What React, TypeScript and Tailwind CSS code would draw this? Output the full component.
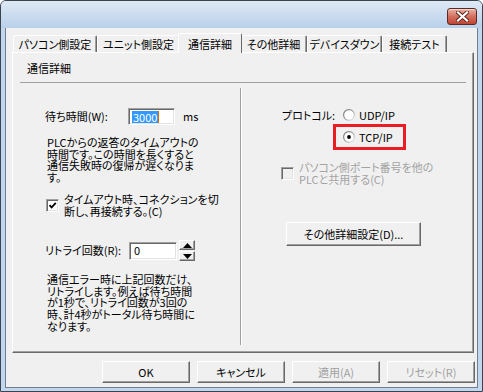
import type { ReactNode } from 'react'

const raised =
  'border border-t-white border-l-white border-r-[#696969] border-b-[#696969] shadow-[inset_-1px_-1px_0_#a0a0a0]'
const sunken =
  'border border-t-[#a0a0a0] border-l-[#a0a0a0] border-r-white border-b-white shadow-[inset_1px_1px_0_#696969,inset_-1px_-1px_0_#e3e3e3]'

const Check = ({ checked, disabled }: { checked?: boolean; disabled?: boolean }) => (
  <div className={`flex h-[13px] w-[13px] shrink-0 items-center justify-center ${sunken} ${disabled ? 'bg-[#f0f0f0]' : 'bg-white'}`}>
    {checked && (
      <svg width="9" height="9" viewBox="0 0 9 9">
        <path d="M1.5 4.2 L3.6 6.4 L7.8 1.8" fill="none" stroke="#000" strokeWidth="1.8" />
      </svg>
    )}
  </div>
)

const Radio = ({ checked, id }: { checked?: boolean; id: string }) => (
  <svg width="12" height="12" viewBox="0 0 12 12" className="shrink-0">
    <defs>
      <linearGradient id={id} x1="0" y1="0" x2="1" y2="1">
        <stop offset="0" stopColor="#6a6a6a" />
        <stop offset="0.55" stopColor="#a8a8a8" />
        <stop offset="1" stopColor="#f4f4f4" />
      </linearGradient>
    </defs>
    <circle cx="6" cy="6" r="5.4" fill="#fff" stroke={`url(#${id})`} strokeWidth="1.2" />
    {checked && <circle cx="6" cy="6" r="1.9" fill="#000" />}
  </svg>
)

const Button = ({ children, disabled, className = '' }: { children: ReactNode; disabled?: boolean; className?: string }) => (
  <div
    className={`flex items-center justify-center bg-[#f0f0f0] ${raised} ${disabled ? 'text-[#a0a0a0]' : 'text-black'} ${className}`}
  >
    {children}
  </div>
)

const tabs = [
  { label: 'パソコン側設定', w: 'w-[84px]' },
  { label: 'ユニット側設定', w: 'w-[83px]' },
  { label: '通信詳細', w: 'w-[64px]', active: true },
  { label: 'その他詳細', w: 'w-[67px]' },
  { label: 'デバイスダウン', w: 'w-[75px]' },
  { label: '接続テスト', w: 'w-[65px]' },
]

export default function App() {
  return (
    <div className="h-[392px] w-[483px] bg-white font-['Noto_Sans_CJK_JP',sans-serif] text-[11px] text-black [font-feature-settings:'palt']">
      <div className="flex h-full flex-col overflow-hidden rounded-t-[6px] border border-[#3c4350] bg-[#c2d6ed]">
        {/* title bar */}
        <div className="flex h-[27px] shrink-0 items-start justify-end bg-gradient-to-b from-[#dfe9f5] to-[#b9d0ea] pt-[7px] pr-[5px]">
          <div className="flex h-[17px] w-[30px] items-center justify-center rounded-[3px] border border-[#5a2a24] bg-gradient-to-b from-[#eab1a4] via-[#d2705f] to-[#c14430] shadow-[inset_0_1px_0_#f6d3cb]">
            <svg width="13" height="11" viewBox="0 0 13 11">
              <path d="M2 1.5 L11 9.5 M11 1.5 L2 9.5" stroke="#5b2219" strokeWidth="4" strokeLinecap="square" />
              <path d="M2 1.5 L11 9.5 M11 1.5 L2 9.5" stroke="#fff" strokeWidth="2.2" strokeLinecap="square" />
            </svg>
          </div>
        </div>

        {/* client */}
        <div className="mx-[4px] mb-[3px] flex flex-1 flex-col border border-t-0 border-[#6f7f93] bg-[#f0f0f0]">
          {/* tabs */}
          <div className="flex items-end pt-[5px] pl-[7px]">
            {tabs.map((t) =>
              t.active ? (
                <div
                  key={t.label}
                  className={`relative z-10 -mx-[2px] -mb-px flex h-[20px] ${t.w} items-start justify-center rounded-t-[2px] border-t border-l border-r border-t-white border-l-white border-r-[#696969] bg-[#f0f0f0] pt-[2px]`}
                >
                  {t.label}
                </div>
              ) : (
                <div
                  key={t.label}
                  className={`flex h-[17px] ${t.w} items-center justify-center rounded-t-[2px] border-t border-l border-r border-t-white border-l-white border-r-[#696969] bg-[#f0f0f0] pt-[1px] shadow-[inset_-1px_0_0_#a0a0a0]`}
                >
                  {t.label}
                </div>
              )
            )}
          </div>

          {/* panel */}
          <div className={`ml-[6px] flex h-[301px] w-[462px] flex-col ${raised}`}>
            <div className="pt-[8px] pl-[14px] leading-[14px]">通信詳細</div>
            <div className="mx-[7px] mt-[7px] h-px bg-[#a0a0a0]" />

            <div className="mx-[7px] mt-[5px] flex h-[257px]">
              {/* left column */}
              <div className="flex w-[220px] flex-col">
                <div className="mt-[20px] flex h-[17px] items-center pl-[25px]">
                  <span className="w-[83px]">待ち時間(W):</span>
                  <div className={`flex h-[17px] w-[47px] items-center bg-white pl-[3px] ${sunken}`}>
                    <span className="bg-[#3399ff] px-px leading-[12px] text-white">3000</span>
                    <span className="h-[12px] w-px bg-[#d46a00]" />
                  </div>
                  <span className="ml-[8px]">ms</span>
                </div>

                <p className="mt-[12px] pl-[27px] leading-[11.7px]">
                  PLCからの返答のタイムアウトの
                  <br />
                  時間です。この時間を長くすると
                  <br />
                  通信失敗時の復帰が遅くなりま
                  <br />
                  す。
                </p>

                <div className="mt-[10px] flex items-center gap-[5px] pl-[26px]">
                  <Check checked />
                  <span className="leading-[11.7px]">
                    タイムアウト時、コネクションを切
                    <br />
                    断し、再接続する。(C)
                  </span>
                </div>

                <div className="mt-[23px] flex h-[21px] items-center pl-[25px]">
                  <span className="w-[84px]">リトライ回数(R):</span>
                  <div className={`flex h-[18px] w-[48px] items-center bg-white pl-[4px] ${sunken}`}>0</div>
                  <div className="ml-[2px] flex h-[21px] w-[16px] flex-col gap-px">
                    <div className={`flex flex-1 items-center justify-center bg-[#f0f0f0] ${raised}`}>
                      <svg width="9" height="5" viewBox="0 0 9 5">
                        <path d="M0 5 L4.5 0 L9 5 Z" fill="#000" />
                      </svg>
                    </div>
                    <div className={`flex flex-1 items-center justify-center bg-[#f0f0f0] ${raised}`}>
                      <svg width="9" height="5" viewBox="0 0 9 5">
                        <path d="M0 0 L9 0 L4.5 5 Z" fill="#000" />
                      </svg>
                    </div>
                  </div>
                </div>

                <p className="mt-[13px] pl-[27px] leading-[11.6px]">
                  通信エラー時に上記回数だけ、
                  <br />
                  リトライします。例えば待ち時間
                  <br />
                  が1秒で、リトライ回数が3回の
                  <br />
                  時、計4秒がトータル待ち時間に
                  <br />
                  なります。
                </p>
              </div>

              {/* divider */}
              <div className="w-[2px] border-l border-r border-l-[#a0a0a0] border-r-white" />

              {/* right column */}
              <div className="flex flex-1 flex-col">
                <div className="mt-[21px] flex h-[12px] items-center pl-[40px]">
                  <span className="w-[61px]">プロトコル:</span>
                  <Radio id="r1" />
                  <span className="ml-[4px]">UDP/IP</span>
                </div>

                <div className="mt-[3px] ml-[91px] flex h-[26px] w-[73px] items-start border-[3px] border-[#ea1c24] pt-[4px] pl-[7px]">
                  <div className="flex h-[12px] items-center">
                    <Radio id="r2" checked />
                    <span className="ml-[4px]">TCP/IP</span>
                  </div>
                </div>

                <div className="mt-[12px] flex items-center gap-[5px] pl-[39px] text-[#a3a3a3]">
                  <Check disabled />
                  <span className="leading-[11.7px]">
                    パソコン側ポート番号を他の
                    <br />
                    PLCと共用する(C)
                  </span>
                </div>

                <Button className="mt-[37px] ml-[44px] h-[24px] w-[135px]">その他詳細設定(D)...</Button>
              </div>
            </div>
          </div>

          {/* bottom buttons */}
          <div className="mt-[8px] flex justify-end gap-[7px] pr-[2px]">
            <Button className="h-[22px] w-[88px]">OK</Button>
            <Button className="h-[22px] w-[88px]">キャンセル</Button>
            <Button className="h-[22px] w-[88px]" disabled>
              適用(A)
            </Button>
            <Button className="h-[22px] w-[88px]" disabled>
              リセット(R)
            </Button>
          </div>
        </div>
      </div>
    </div>
  )
}
